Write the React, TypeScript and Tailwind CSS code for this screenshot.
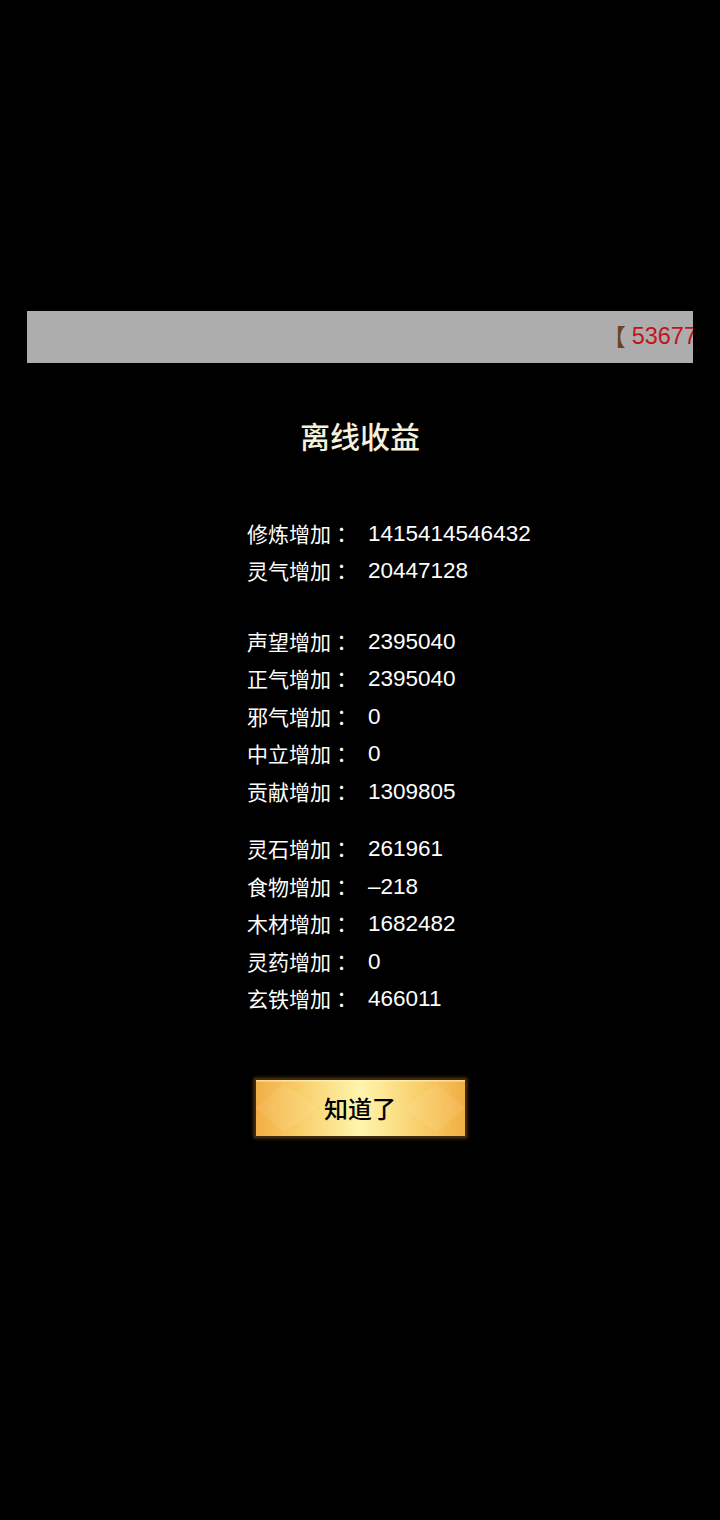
const groups: [string, string][][] = [
  [
    ["修炼增加", "1415414546432"],
    ["灵气增加", "20447128"],
  ],
  [
    ["声望增加", "2395040"],
    ["正气增加", "2395040"],
    ["邪气增加", "0"],
    ["中立增加", "0"],
    ["贡献增加", "1309805"],
  ],
  [
    ["灵石增加", "261961"],
    ["食物增加", "-218"],
    ["木材增加", "1682482"],
    ["灵药增加", "0"],
    ["玄铁增加", "466011"],
  ],
];

const font = { fontFamily: '"Liberation Sans", "Noto Sans CJK SC", sans-serif' };
const tcFont = { fontFamily: '"Noto Sans CJK TC", sans-serif' };

export default function App() {
  return (
    <div className="min-h-[1520px] w-[720px] bg-black" style={font}>
      <div className="h-[311px]" />
      {/* notice bar, the scrolling text is cut at the right edge */}
      <div className="mx-[27px] flex h-[52px] items-center justify-end overflow-hidden bg-[#adadad]">
        <span className="-mr-[4px] flex items-center whitespace-nowrap text-[23.5px] leading-none text-[#c0151b]">
          <span className="mr-[6px] text-[#6b4423]" style={tcFont}>【</span>
          53677
        </span>
      </div>

      <div className="mt-[53px] text-center text-[30px] font-medium leading-[44px] text-[#f6f1dc]">离线收益</div>

      <div className="mt-[55px] ml-[247px] text-[22.5px] text-white">
        {groups.map((g, gi) => (
          <div key={gi} className={gi === 1 ? "mt-[33px]" : gi === 2 ? "mt-[20px]" : ""}>
            {g.map(([k, v]) => (
              <div key={k} className="flex h-[37.5px] items-center">
                <span className="w-[121px] whitespace-nowrap text-[21px]">
                  {k}
                  <span style={tcFont}>：</span>
                </span>
                <span>{v.replace("-", "\u2013")}</span>
              </div>
            ))}
          </div>
        ))}
      </div>

      <div className="mt-[60px] flex justify-center">
        <button className="relative flex h-[60px] w-[213px] items-center justify-center overflow-hidden border-2 border-[#3d2a10] bg-[linear-gradient(90deg,#f2ae45_0%,#f8cc68_20%,#fdeb9a_42%,#fff4ae_50%,#fdeb9a_58%,#f8cc68_80%,#f2ae45_100%)] shadow-[0_0_4px_rgba(120,80,20,0.7)]">
          <svg className="absolute inset-0 h-full w-full" viewBox="0 0 209 56" preserveAspectRatio="none">
            <rect x="0" y="0" width="209" height="1.5" fill="#fff6c8" opacity="0.6" />
            <polygon points="0,28 28,4 60,28 28,52" fill="#fff3c0" opacity="0.1" />
            <polygon points="209,28 181,4 149,28 181,52" fill="#fff3c0" opacity="0.1" />
            <polygon points="14,28 36,10 58,28 36,46" fill="none" stroke="#fff0b8" strokeWidth="1" opacity="0.15" />
            <polygon points="195,28 173,10 151,28 173,46" fill="none" stroke="#fff0b8" strokeWidth="1" opacity="0.15" />
          </svg>
          <span className="relative text-[24px] font-medium text-black" style={{ fontFamily: '"Noto Sans CJK SC", sans-serif' }}>
            知道了
          </span>
        </button>
      </div>
    </div>
  );
}
